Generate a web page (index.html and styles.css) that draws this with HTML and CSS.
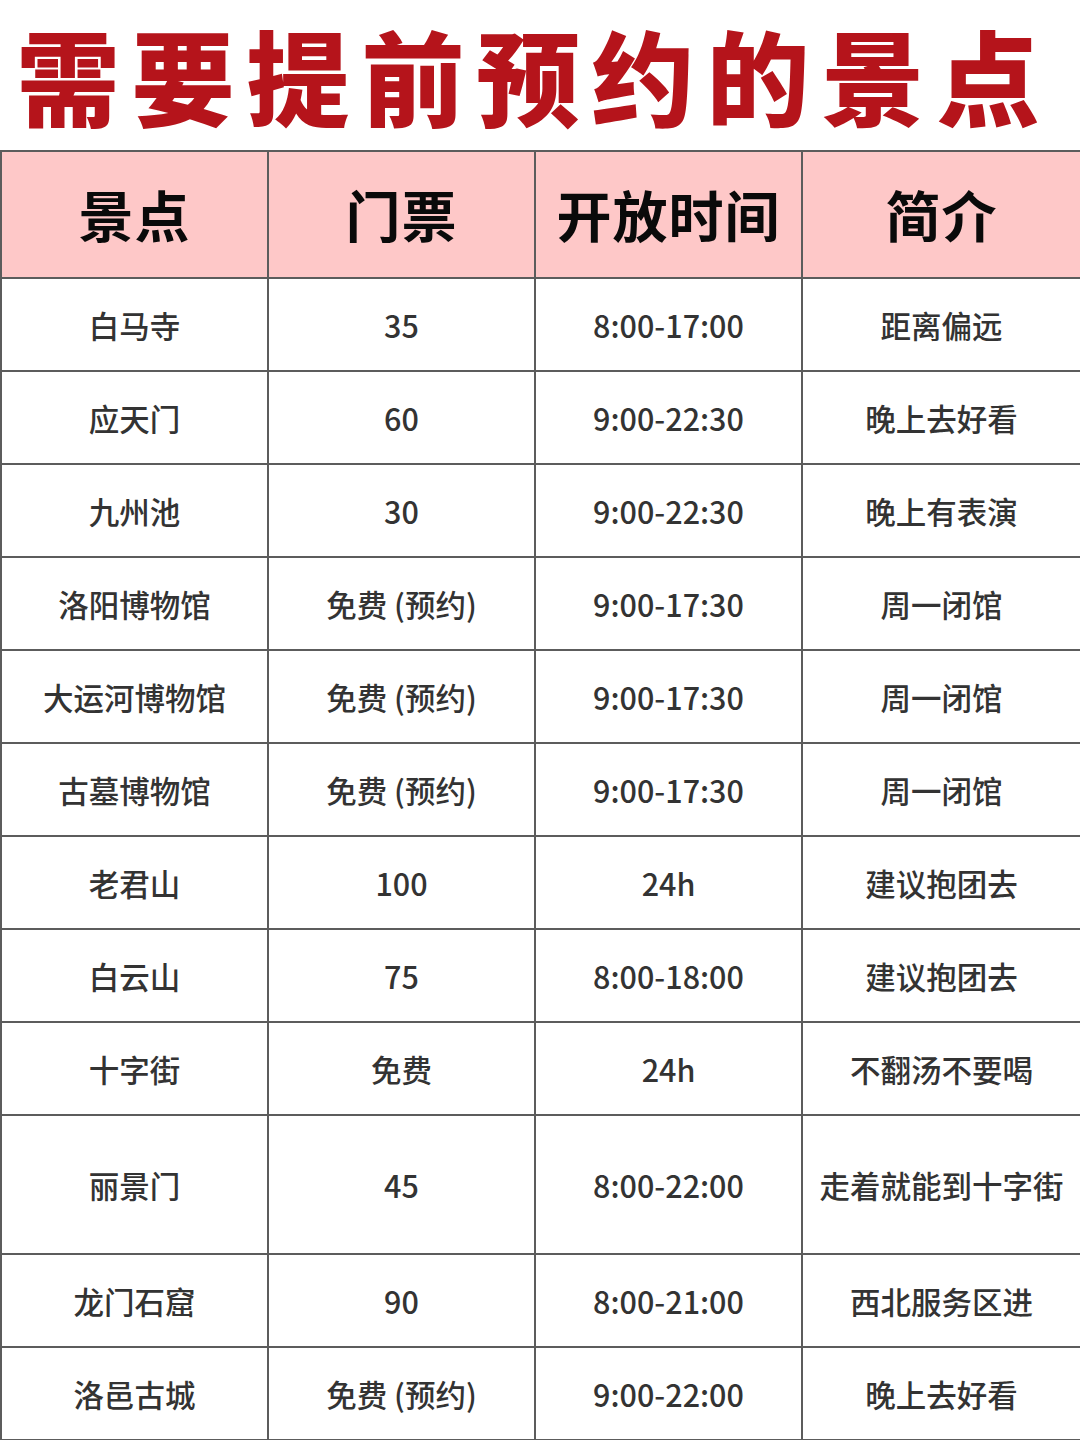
FILE: index.html
```html
<!DOCTYPE html>
<html lang="zh-CN">
<head>
<meta charset="utf-8">
<link rel="stylesheet" href="styles.css">
</head>
<body>
<div class="page">
  <h1 class="title">需要提前预约的景点</h1>
  <table class="spots">
    <colgroup>
      <col class="c1"><col class="c2"><col class="c3"><col class="c4">
    </colgroup>
    <thead>
      <tr class="head"><th>景点</th><th>门票</th><th>开放时间</th><th>简介</th></tr>
    </thead>
    <tbody>
      <tr><td>白马寺</td><td>35</td><td>8:00-17:00</td><td>距离偏远</td></tr>
      <tr><td>应天门</td><td>60</td><td>9:00-22:30</td><td>晚上去好看</td></tr>
      <tr><td>九州池</td><td>30</td><td>9:00-22:30</td><td>晚上有表演</td></tr>
      <tr><td>洛阳博物馆</td><td>免费 (预约)</td><td>9:00-17:30</td><td>周一闭馆</td></tr>
      <tr><td>大运河博物馆</td><td>免费 (预约)</td><td>9:00-17:30</td><td>周一闭馆</td></tr>
      <tr><td>古墓博物馆</td><td>免费 (预约)</td><td>9:00-17:30</td><td>周一闭馆</td></tr>
      <tr><td>老君山</td><td>100</td><td>24h</td><td>建议抱团去</td></tr>
      <tr><td>白云山</td><td>75</td><td>8:00-18:00</td><td>建议抱团去</td></tr>
      <tr><td>十字街</td><td>免费</td><td>24h</td><td>不翻汤不要喝</td></tr>
      <tr class="tall"><td>丽景门</td><td>45</td><td>8:00-22:00</td><td>走着就能到十字街</td></tr>
      <tr><td>龙门石窟</td><td>90</td><td>8:00-21:00</td><td>西北服务区进</td></tr>
      <tr><td>洛邑古城</td><td>免费 (预约)</td><td>9:00-22:00</td><td>晚上去好看</td></tr>
    </tbody>
  </table>
</div>
</body>
</html>
```

FILE: styles.css
```css
html, body {
  margin: 0;
  padding: 0;
  background: #ffffff;
}

.page {
  width: 1080px;
  height: 1440px;
  overflow: hidden;
  font-family: "Noto Sans CJK SC", "Noto Sans", sans-serif;
}

.title {
  margin: 0;
  height: 150px;
  display: flex;
  align-items: center;
  justify-content: center;
  padding: 0 12px 0 0;
  box-sizing: border-box;
  font-size: 103px;
  font-weight: 900;
  letter-spacing: 12px;
  white-space: nowrap;
  color: #b5141b;
  line-height: 1.45;
}

.spots {
  width: 1080px;
  border-collapse: collapse;
  table-layout: fixed;
}

.c1, .c2, .c3 { width: 267px; }
.c4 { width: 279px; }

.spots th,
.spots td {
  border: 2px solid #5c5c5c;
  padding: 0;
  text-align: center;
  vertical-align: middle;
  white-space: nowrap;
}

.spots tr.head th {
  height: 121px;
  padding-bottom: 4px;
  background: #fec8c8;
  color: #0a0a0a;
  font-size: 55px;
  font-weight: 700;
  letter-spacing: 1px;
}

.spots td {
  height: 91px;
  color: #333333;
  font-size: 30.5px;
  font-weight: 500;
}

.spots tr.tall td {
  height: 137px;
}
```
